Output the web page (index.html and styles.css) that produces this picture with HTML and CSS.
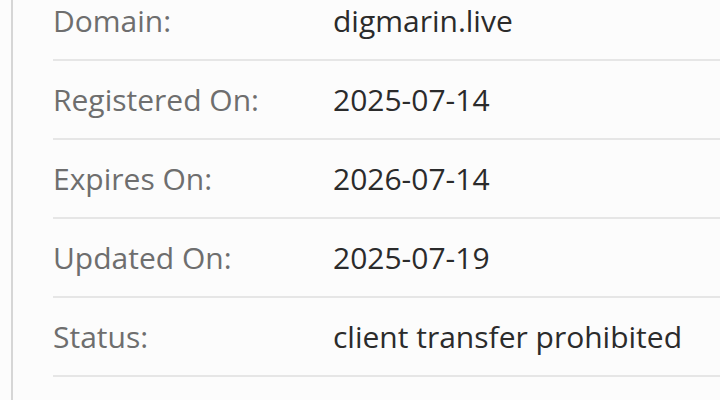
FILE: index.html
```html
<!DOCTYPE html>
<html>
<head>
<meta charset="utf-8">
<link rel="stylesheet" href="styles.css">
</head>
<body>
<div class="panel">
  <div class="row"><div class="label">Domain:</div><div class="value">digmarin.live</div></div>
  <div class="row"><div class="label">Registered On:</div><div class="value">2025-07-14</div></div>
  <div class="row"><div class="label">Expires On:</div><div class="value">2026-07-14</div></div>
  <div class="row"><div class="label">Updated On:</div><div class="value">2025-07-19</div></div>
  <div class="row"><div class="label">Status:</div><div class="value">client transfer prohibited</div></div>
</div>
</body>
</html>
```
FILE: styles.css
```css
html, body {
  margin: 0;
  padding: 0;
  background: #fcfcfc;
}
.panel {
  margin-left: 11px;
  margin-top: -18px;
  height: 418px;
  box-sizing: border-box;
  border-left: 2px solid #d6d6d6;
  padding-left: 40px;
  font-family: "Open Sans", sans-serif;
  font-size: 30px;
}
.row {
  display: grid;
  grid-template-columns: 280px 1fr;
  height: 77px;
  align-items: center;
  border-bottom: 2px solid #e6e6e6;
}
.label {
  color: #6e6e6e;
}
.value {
  color: #2b2b2b;
}
```
